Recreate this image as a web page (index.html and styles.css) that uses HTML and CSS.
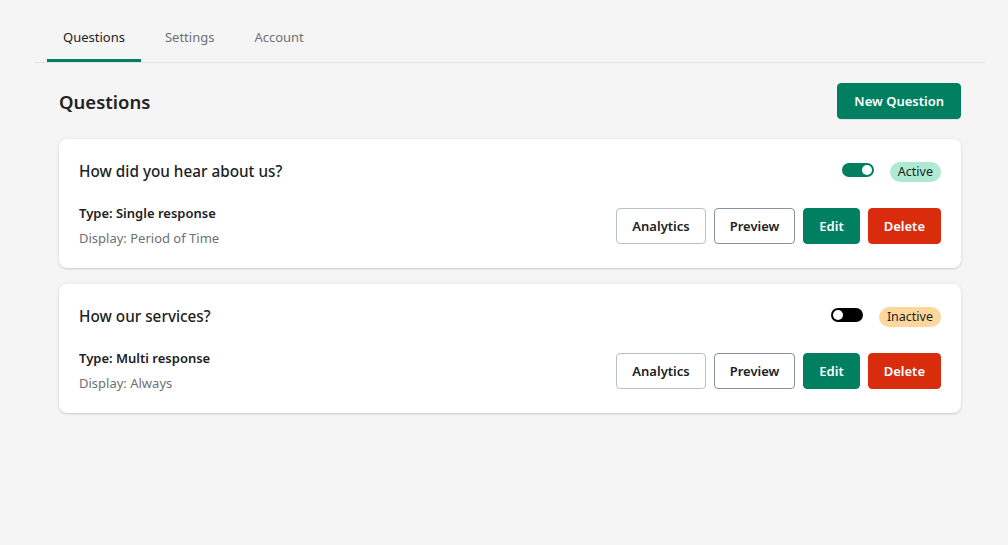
FILE: index.html
```html
<!DOCTYPE html>
<html lang="en">
<head>
    <meta charset="UTF-8">
    <meta name="viewport" content="width=device-width, initial-scale=1.0">
    <title>Questions</title>
    <link rel="stylesheet" href="styles.css">
</head>
<body>
    <div class="app">
        <nav class="tabs">
            <a class="tab active" href="#">Questions</a>
            <a class="tab" href="#">Settings</a>
            <a class="tab" href="#">Account</a>
        </nav>

        <div class="page">
            <div class="page-header">
                <h1>Questions</h1>
                <button class="btn btn-primary btn-new">New Question</button>
            </div>

            <div class="card">
                <div class="card-top">
                    <h2 class="question-title">How did you hear about us?</h2>
                    <div class="status">
                        <span class="toggle on"><span class="knob"></span></span>
                        <span class="badge badge-active">Active</span>
                    </div>
                </div>
                <div class="card-body">
                    <div class="meta">
                        <div class="meta-type">Type: Single response</div>
                        <div class="meta-display">Display: Period of Time</div>
                    </div>
                    <div class="actions">
                        <button class="btn">Analytics</button>
                        <button class="btn btn-dark-border">Preview</button>
                        <button class="btn btn-primary">Edit</button>
                        <button class="btn btn-danger">Delete</button>
                    </div>
                </div>
            </div>

            <div class="card">
                <div class="card-top">
                    <h2 class="question-title">How our services?</h2>
                    <div class="status">
                        <span class="toggle off"><span class="knob"></span></span>
                        <span class="badge badge-inactive">Inactive</span>
                    </div>
                </div>
                <div class="card-body">
                    <div class="meta">
                        <div class="meta-type">Type: Multi response</div>
                        <div class="meta-display">Display: Always</div>
                    </div>
                    <div class="actions">
                        <button class="btn">Analytics</button>
                        <button class="btn btn-dark-border">Preview</button>
                        <button class="btn btn-primary">Edit</button>
                        <button class="btn btn-danger">Delete</button>
                    </div>
                </div>
            </div>
        </div>
    </div>
</body>
</html>
```

FILE: styles.css
```css
* {
    margin: 0;
    padding: 0;
    box-sizing: border-box;
}

body {
    background: #f5f5f5;
    color: #202223;
    font-family: "Noto Sans", "Open Sans", sans-serif;
    font-size: 13px;
}

.app {
    width: 950px;
    margin-left: 35px;
}

.tabs {
    display: flex;
    gap: 8px;
    padding: 14px 12px 0;
    border-bottom: 1px solid #e1e3e5;
}

.tab {
    display: block;
    padding: 13px 16px 12px;
    line-height: 20px;
    font-size: 13px;
    color: #6d7175;
    text-decoration: none;
    border-bottom: 3px solid transparent;
}

.tab.active {
    color: #202223;
    border-bottom-color: #008060;
}

.page {
    padding: 20px 24px;
}

.page-header {
    display: flex;
    justify-content: space-between;
    align-items: center;
    margin-bottom: 20px;
}

h1 {
    font-size: 18.5px;
    font-weight: 600;
    line-height: 28px;
    margin-top: 2px;
}

.btn {
    height: 36px;
    padding: 0 15px;
    font-family: inherit;
    font-size: 13px;
    font-weight: 600;
    color: #202223;
    background: #fff;
    border: 1px solid #babfc3;
    border-radius: 4px;
    cursor: pointer;
}

.btn-dark-border {
    border-color: #8c9196;
}

.btn-primary {
    background: #008060;
    border-color: #008060;
    color: #fff;
}

.btn-danger {
    background: #d82c0d;
    border-color: #d82c0d;
    color: #fff;
}

.btn-new {
    padding: 0 16px;
    box-shadow: 0 1px 0 rgba(0, 0, 0, 0.08);
}

.card {
    background: #fff;
    border-radius: 8px;
    padding: 20px 20px 18px;
    margin-bottom: 16px;
    box-shadow: 0 0 5px rgba(23, 24, 24, 0.05), 0 1px 2px rgba(0, 0, 0, 0.15);
}

.card-top {
    display: flex;
    justify-content: space-between;
    align-items: center;
    height: 24px;
    margin-bottom: 18px;
}

.question-title {
    font-size: 15.3px;
    font-weight: 500;
    line-height: 24px;
}

.status {
    display: flex;
    align-items: center;
    gap: 16px;
}

.toggle {
    display: flex;
    align-items: center;
    width: 32px;
    height: 14px;
    border-radius: 7px;
    padding: 0 2px;
    margin-top: -3px;
}

.toggle .knob {
    width: 10px;
    height: 10px;
    border-radius: 50%;
    background: #fff;
}

.toggle.on {
    background: #008060;
    justify-content: flex-end;
}

.toggle.off {
    background: #000;
    justify-content: flex-start;
}

.badge {
    padding: 0 8px;
    margin-top: 2px;
    line-height: 20px;
    font-size: 12.5px;
    border-radius: 10px;
    color: #202223;
}

.badge-active {
    background: #aee9d1;
}

.badge-inactive {
    background: #ffd79d;
}

.card-body {
    display: flex;
    justify-content: space-between;
    align-items: center;
}

.meta {
    line-height: 24px;
}

.meta-type {
    font-weight: 600;
}

.meta-display {
    margin-top: 1px;
    color: #6d7175;
}

.actions {
    display: flex;
    gap: 8px;
}
```
